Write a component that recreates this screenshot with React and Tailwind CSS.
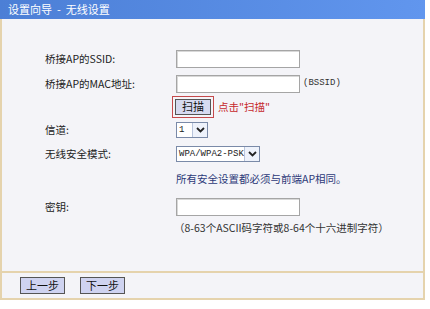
import React from "react";

const font = { fontFamily: '"Noto Sans CJK SC", "Liberation Sans", sans-serif' };
const mono = { fontFamily: '"Liberation Mono", monospace' };

function Row({ className = "", label, children }) {
  return (
    <div className={`flex items-center ${className}`}>
      <div className="w-[174px] pl-[43px] shrink-0 whitespace-nowrap text-[10.5px] text-[#222]">{label}</div>
      <div className="flex items-center">{children}</div>
    </div>
  );
}

function TextBox() {
  return <div className="w-[124px] h-[18px] bg-white border border-[#a5a5a5] shadow-[inset_1px_1px_0_#d8d8d8]" />;
}

function Select({ text, w }) {
  return (
    <div className={`flex h-[16px] ${w} border border-[#7a8aa8] bg-white`}>
      <div className="flex-1 flex items-center pl-[2px] whitespace-nowrap text-[9px] leading-none text-[#222]" style={mono}>
        {text}
      </div>
      <div className="w-[15px] flex items-center justify-center border-l border-[#b8c4dc] bg-[#eef2fb]">
        <svg width="9" height="6" viewBox="0 0 9 6">
          <path d="M1 1 L4.5 4.5 L8 1" fill="none" stroke="#222" strokeWidth="1.8" />
        </svg>
      </div>
    </div>
  );
}

export default function App() {
  return (
    <div className="w-[430px] h-[309px] bg-white" style={font}>
      <div className="w-[425px] h-[19px] flex items-center pl-[8px] whitespace-pre text-[11px] text-white bg-gradient-to-r from-[#4c7fd6] to-[#6196ee]">
        设置向导  -  无线设置
      </div>
      <div className="w-[425px] h-[281px] flex flex-col border-x-2 border-b-2 border-[#e5d3ad] bg-[#f4f4f8]">
        <div className="h-[254px] border-b-2 border-[#e5d3ad] pt-[30px]">
          <Row className="h-[19px]" label="桥接AP的SSID:">
            <TextBox />
          </Row>
          <Row className="h-[19px] mt-[6px]" label="桥接AP的MAC地址:">
            <TextBox />
            <span className="ml-[3px] text-[9px] text-[#333]" style={mono}>(BSSID)</span>
          </Row>
          <div className="h-[23px] mt-[2px] flex items-center pl-[170px]">
            <div className="border-[1.5px] border-[#c44a4c] px-[2px] py-[2px]">
              <div className="w-[36px] h-[16px] flex items-center justify-center bg-[#d6daf0] border border-[#555] text-[11px] text-[#111]">
                扫描
              </div>
            </div>
            <span className="ml-[4px] whitespace-nowrap text-[10.5px] text-[#c62a2e]">点击"扫描"</span>
          </div>
          <Row className="h-[18px] mt-[3px]" label="信道:">
            <Select text="1" w="w-[32px]" />
          </Row>
          <Row className="h-[18px] mt-[6px]" label="无线安全模式:">
            <Select text="WPA/WPA2-PSK" w="w-[84px]" />
          </Row>
          <div className="h-[18px] mt-[7px] flex items-center pl-[174px] whitespace-nowrap text-[10.5px] text-[#2d3a78]">
            所有安全设置都必须与前端AP相同。
          </div>
          <Row className="h-[19px] mt-[9px]" label="密钥:">
            <TextBox />
          </Row>
          <div className="h-[18px] mt-[3px] flex items-center pl-[172px] whitespace-nowrap text-[10.5px] text-[#333]">
            （8-63个ASCII码字符或8-64个十六进制字符）
          </div>
        </div>
        <div className="flex-1 flex items-center pl-[18px] gap-[15px]">
          <div className="w-[45px] h-[17px] flex items-center justify-center bg-[#cfd3f0] border border-[#555] text-[11px] text-[#111]">上一步</div>
          <div className="w-[45px] h-[17px] flex items-center justify-center bg-[#cfd3f0] border border-[#555] text-[11px] text-[#111]">下一步</div>
        </div>
      </div>
    </div>
  );
}
